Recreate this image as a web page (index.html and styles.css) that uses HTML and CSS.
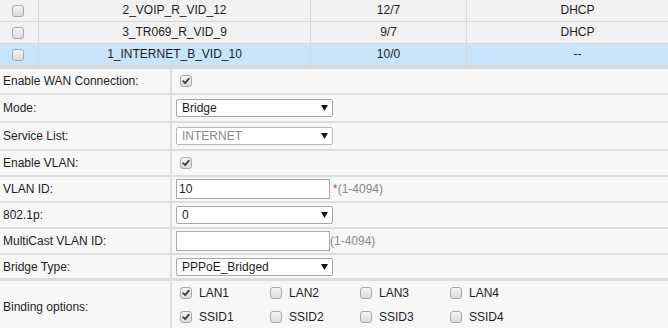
FILE: index.html
```html
<!DOCTYPE html>
<html>
<head>
<meta charset="utf-8">
<link rel="stylesheet" href="styles.css">
</head>
<body>
<div class="page">
  <div class="wanlist">
    <div class="cell chk"><span class="cb"></span></div>
    <div class="cell">2_VOIP_R_VID_12</div>
    <div class="cell">12/7</div>
    <div class="cell">DHCP</div>

    <div class="cell chk"><span class="cb"></span></div>
    <div class="cell">3_TR069_R_VID_9</div>
    <div class="cell">9/7</div>
    <div class="cell">DHCP</div>

    <div class="cell chk sel"><span class="cb"></span></div>
    <div class="cell sel">1_INTERNET_B_VID_10</div>
    <div class="cell sel">10/0</div>
    <div class="cell sel">--</div>
  </div>

  <div class="form">
    <div class="lbl">Enable WAN Connection:</div>
    <div class="val pad"><span class="cb on"><svg viewBox="0 0 12 12"><path d="M2.6 6.2 L5 8.6 L9.4 3.2"/></svg></span></div>

    <div class="lbl">Mode:</div>
    <div class="val"><div class="select"><span>Bridge</span><svg class="arr" viewBox="0 0 8 7"><polygon points="0,0 8,0 4,7"/></svg></div></div>

    <div class="lbl">Service List:</div>
    <div class="val"><div class="select dis"><span>INTERNET</span><svg class="arr" viewBox="0 0 8 7"><polygon points="0,0 8,0 4,7"/></svg></div></div>

    <div class="lbl">Enable VLAN:</div>
    <div class="val pad"><span class="cb on"><svg viewBox="0 0 12 12"><path d="M2.6 6.2 L5 8.6 L9.4 3.2"/></svg></span></div>

    <div class="lbl">VLAN ID:</div>
    <div class="val"><input class="txt" type="text" value="10"><span class="req">*</span><span class="hint">(1-4094)</span></div>

    <div class="lbl">802.1p:</div>
    <div class="val"><div class="select"><span>0</span><svg class="arr" viewBox="0 0 8 7"><polygon points="0,0 8,0 4,7"/></svg></div></div>

    <div class="lbl">MultiCast VLAN ID:</div>
    <div class="val"><input class="txt" type="text" value=""><span class="hint">(1-4094)</span></div>

    <div class="lbl">Bridge Type:</div>
    <div class="val"><div class="select"><span>PPPoE_Bridged</span><svg class="arr" viewBox="0 0 8 7"><polygon points="0,0 8,0 4,7"/></svg></div></div>

    <div class="lbl top">Binding options:</div>
    <div class="val pad top">
      <div class="binds">
        <label class="opt"><span class="cb on"><svg viewBox="0 0 12 12"><path d="M2.6 6.2 L5 8.6 L9.4 3.2"/></svg></span>LAN1</label>
        <label class="opt"><span class="cb"></span>LAN2</label>
        <label class="opt"><span class="cb"></span>LAN3</label>
        <label class="opt"><span class="cb"></span>LAN4</label>
        <label class="opt"><span class="cb on"><svg viewBox="0 0 12 12"><path d="M2.6 6.2 L5 8.6 L9.4 3.2"/></svg></span>SSID1</label>
        <label class="opt"><span class="cb"></span>SSID2</label>
        <label class="opt"><span class="cb"></span>SSID3</label>
        <label class="opt"><span class="cb"></span>SSID4</label>
      </div>
    </div>
  </div>
</div>
</body>
</html>
```

FILE: styles.css
```css
html, body {
  margin: 0;
  padding: 0;
  overflow: hidden;
  background: #f7f7f7;
}
body {
  font-family: "Liberation Sans", Arial, sans-serif;
  font-size: 12px;
  color: #1e1e1e;
}
.page {
  width: 668px;
  overflow: hidden;
}
.wanlist {
  display: grid;
  grid-template-columns: 38px 271px 155px 221px;
  grid-auto-rows: 21px;
  gap: 1px;
  width: 688px;
  background: #d8d8d8;
  border-bottom: 4px solid #d8d8d8;
}
.cell {
  background: #f1f1f1;
  display: flex;
  align-items: center;
  justify-content: center;
  line-height: 21px;
}
.cell.chk {
  justify-content: flex-start;
  padding-left: 12px;
}
.cell.sel {
  background: #c7e4fa;
}
.cb {
  display: inline-flex;
  box-sizing: border-box;
  width: 12px;
  height: 12px;
  border: 1px solid #a9a9a9;
  border-radius: 3px;
  background: linear-gradient(#f4f4f4, #dcdcdc);
  flex: none;
}
.cb svg {
  width: 10px;
  height: 10px;
}
.cb svg path {
  fill: none;
  stroke: #444;
  stroke-width: 2.3;
  stroke-linecap: round;
  stroke-linejoin: round;
}
.form {
  display: grid;
  grid-template-columns: 170px 1fr;
  grid-template-rows: 24px 26px 26px 24px 24px 24px 24px 23px 52px;
  column-gap: 2px;
  row-gap: 2px;
  background: #dcdcdc;
}
.lbl {
  background: #f7f7f7;
  display: flex;
  align-items: center;
  padding-left: 3px;
}
.val {
  background: #f7f7f7;
  display: flex;
  align-items: center;
  padding-left: 4px;
}
.val.pad {
  padding-left: 8px;
}
.lbl.top, .val.top {
  border-top: 1px solid #dcdcdc;
}
.select {
  box-sizing: border-box;
  width: 157px;
  height: 18px;
  border: 1px solid #a6a6a6;
  border-radius: 2px;
  background: #fff;
  display: flex;
  align-items: center;
  justify-content: space-between;
  padding: 0 4px 0 5px;
  color: #1e1e1e;
}
.select.dis {
  color: #8a8a8a;
  border-color: #b9b9b9;
}
.arr {
  width: 7px;
  height: 6px;
  fill: #111;
}
.txt {
  box-sizing: border-box;
  width: 154px;
  height: 20px;
  margin: 0;
  border: 1px solid #a9a9a9;
  background: #fff;
  padding: 0 2px;
  font: inherit;
  color: #1e1e1e;
  outline: none;
}
.req {
  color: #e8413c;
  margin-left: 3px;
}
.hint {
  color: #8a8a8a;
}
.binds {
  display: grid;
  grid-template-columns: repeat(4, 90px);
  grid-auto-rows: 24px;
  align-self: flex-start;
  margin-top: 0;
}
.opt {
  display: flex;
  align-items: center;
  gap: 7px;
}
```
